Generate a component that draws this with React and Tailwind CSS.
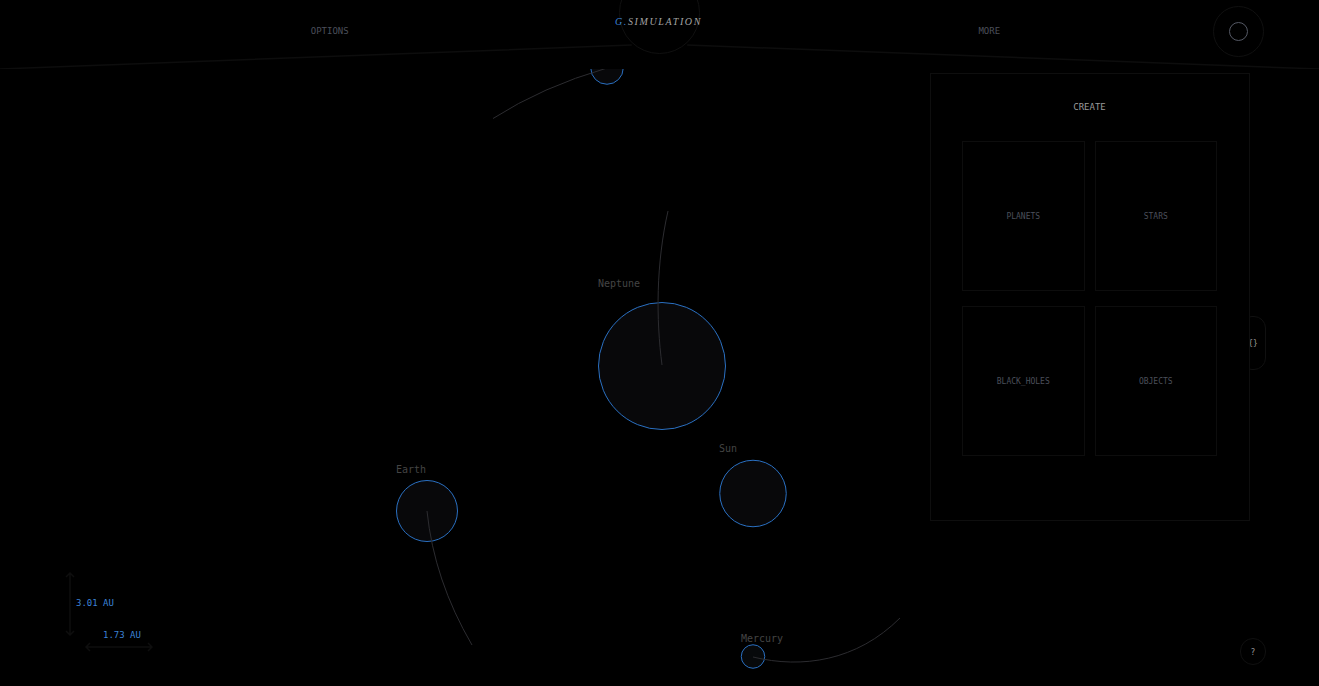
const bodies = [
  { name: "Neptune", x: 662, y: 297, r: 63.5, labelX: 598, labelY: 218, trail: "M662 296C656 250 656 195 668 142", fill: "#08080a" },
  { name: "Sun", x: 753, y: 424.5, r: 33.25, labelX: 719, labelY: 383, trail: "", fill: "#08080a" },
  { name: "Earth", x: 427, y: 442, r: 30.5, labelX: 396, labelY: 404, trail: "M427 442Q434 511 472 576", fill: "#08080a" },
  { name: "Mercury", x: 753, y: 587.5, r: 11.75, labelX: 741, labelY: 573, trail: "M753 588C802 600 857 592 900 549", fill: "#07090b" },
  { name: "", x: 607, y: -1, r: 16.25, labelX: 0, labelY: 0, trail: "M493 49.5Q542 18 607 -1", fill: "#08080a" },
];

const categories = ["PLANETS", "STARS", "BLACK_HOLES", "OBJECTS"];

function Header() {
  return (
    <header className="relative h-[69px] shrink-0">
      <svg
        className="absolute inset-0 h-full w-full"
        viewBox="0 0 1000 69"
        preserveAspectRatio="none"
        fill="none"
        stroke="#0d0d0d"
        strokeWidth="1.5"
        aria-hidden="true"
      >
        <path d="M0 69L479 45M521 45L1000 69" vectorEffect="non-scaling-stroke" />
      </svg>
      <div className="absolute inset-0 overflow-hidden" aria-hidden="true">
        <div className="mx-auto -mt-7 h-[82px] w-[81px] rounded-full border border-[#101010] bg-black" />
      </div>
      <nav className="relative grid h-16 grid-cols-2 items-center text-[9px] text-[#4b4f5a]">
        <button type="button" className="justify-self-center">OPTIONS</button>
        <button type="button" className="justify-self-center">MORE</button>
      </nav>
      <div className="pointer-events-none absolute inset-x-0 top-3.5 flex justify-center">
        <a
          href="#"
          className="pointer-events-auto pr-0.5 font-['Liberation_Serif',serif] text-[10px] leading-4 tracking-[1.6px] text-[#a3a3a3] italic"
        >
          <span className="text-[#3b82d6]">G.</span>SIMULATION
        </a>
      </div>
      <button
        type="button"
        aria-label="Record"
        className="absolute top-1.5 right-[55px] flex h-[51px] w-[51px] items-center justify-center rounded-full border border-[#101010]"
      >
        <span className="h-[19px] w-[19px] rounded-full border border-[#555965]" />
      </button>
    </header>
  );
}

function Scene() {
  return (
    <svg className="absolute inset-0 h-full w-full" fill="none">
      {bodies.map((b) => (
        <g key={b.labelX}>
          <circle cx={b.x} cy={b.y} r={b.r} fill={b.fill} stroke="#2a70c2" />
          <path d={b.trail} stroke="#2c2c30" />
          <text x={b.labelX} y={b.labelY} fontSize="10" fill="#444444">
            {b.name}
          </text>
        </g>
      ))}
    </svg>
  );
}

function CreatePanel() {
  return (
    <section className="absolute top-1 right-[69px] z-10 h-[448px] w-80 border border-[#0e0e0e] bg-black pr-8 pl-[31px] pt-6">
      <h2 className="text-center text-[9px] leading-[18px] text-[#999999]">CREATE</h2>
      <div className="mt-[25px] grid grid-cols-2 gap-x-[10px] gap-y-[15px]">
        {categories.map((c) => (
          <button
            key={c}
            type="button"
            className="h-[150px] border border-[#0d0d0d] pt-0.5 text-[8px] text-[#4b4f5a]"
          >
            {c}
          </button>
        ))}
      </div>
    </section>
  );
}

function Scale() {
  return (
    <div className="absolute bottom-[34px] left-[65px] flex text-[9px] leading-3 text-[#3b82d6]">
      <svg width="10" height="80" fill="none" stroke="#0e0e0e" strokeWidth="1.5" aria-hidden="true">
        <path d="M5 1V63M1 5L5 1L9 5M1 59L5 63L9 59" />
      </svg>
      <div className="flex flex-col">
        <span className="mt-[25px] ml-px">3.01 AU</span>
        <div className="mt-5 ml-2.5 flex flex-col items-center">
          <span className="pl-1.5">1.73 AU</span>
          <svg className="mt-px" width="68" height="10" fill="none" stroke="#0e0e0e" strokeWidth="1.5" aria-hidden="true">
            <path d="M1 5H67M5 1L1 5L5 9M63 1L67 5L63 9" />
          </svg>
        </div>
      </div>
    </div>
  );
}

export default function App() {
  return (
    <div className="flex h-screen flex-col overflow-hidden bg-black font-['DejaVu_Sans_Mono',monospace]">
      <Header />
      <main className="relative flex-1 overflow-hidden">
        <Scene />
        <CreatePanel />
        <Scale />
        <button
          type="button"
          aria-label="Edit JSON"
          className="absolute top-[247px] right-[53px] h-[54px] w-[26px] rounded-xl border border-[#101010] bg-black pt-0.5 text-[8px] text-[#999999]"
        >
          {"{}"}
        </button>
        <button
          type="button"
          aria-label="Help"
          className="absolute right-[53px] bottom-[21px] h-[27px] w-[26px] rounded-full border border-[#101010] bg-black pt-0.5 text-[8px] text-[#999999]"
        >
          ?
        </button>
      </main>
    </div>
  );
}
